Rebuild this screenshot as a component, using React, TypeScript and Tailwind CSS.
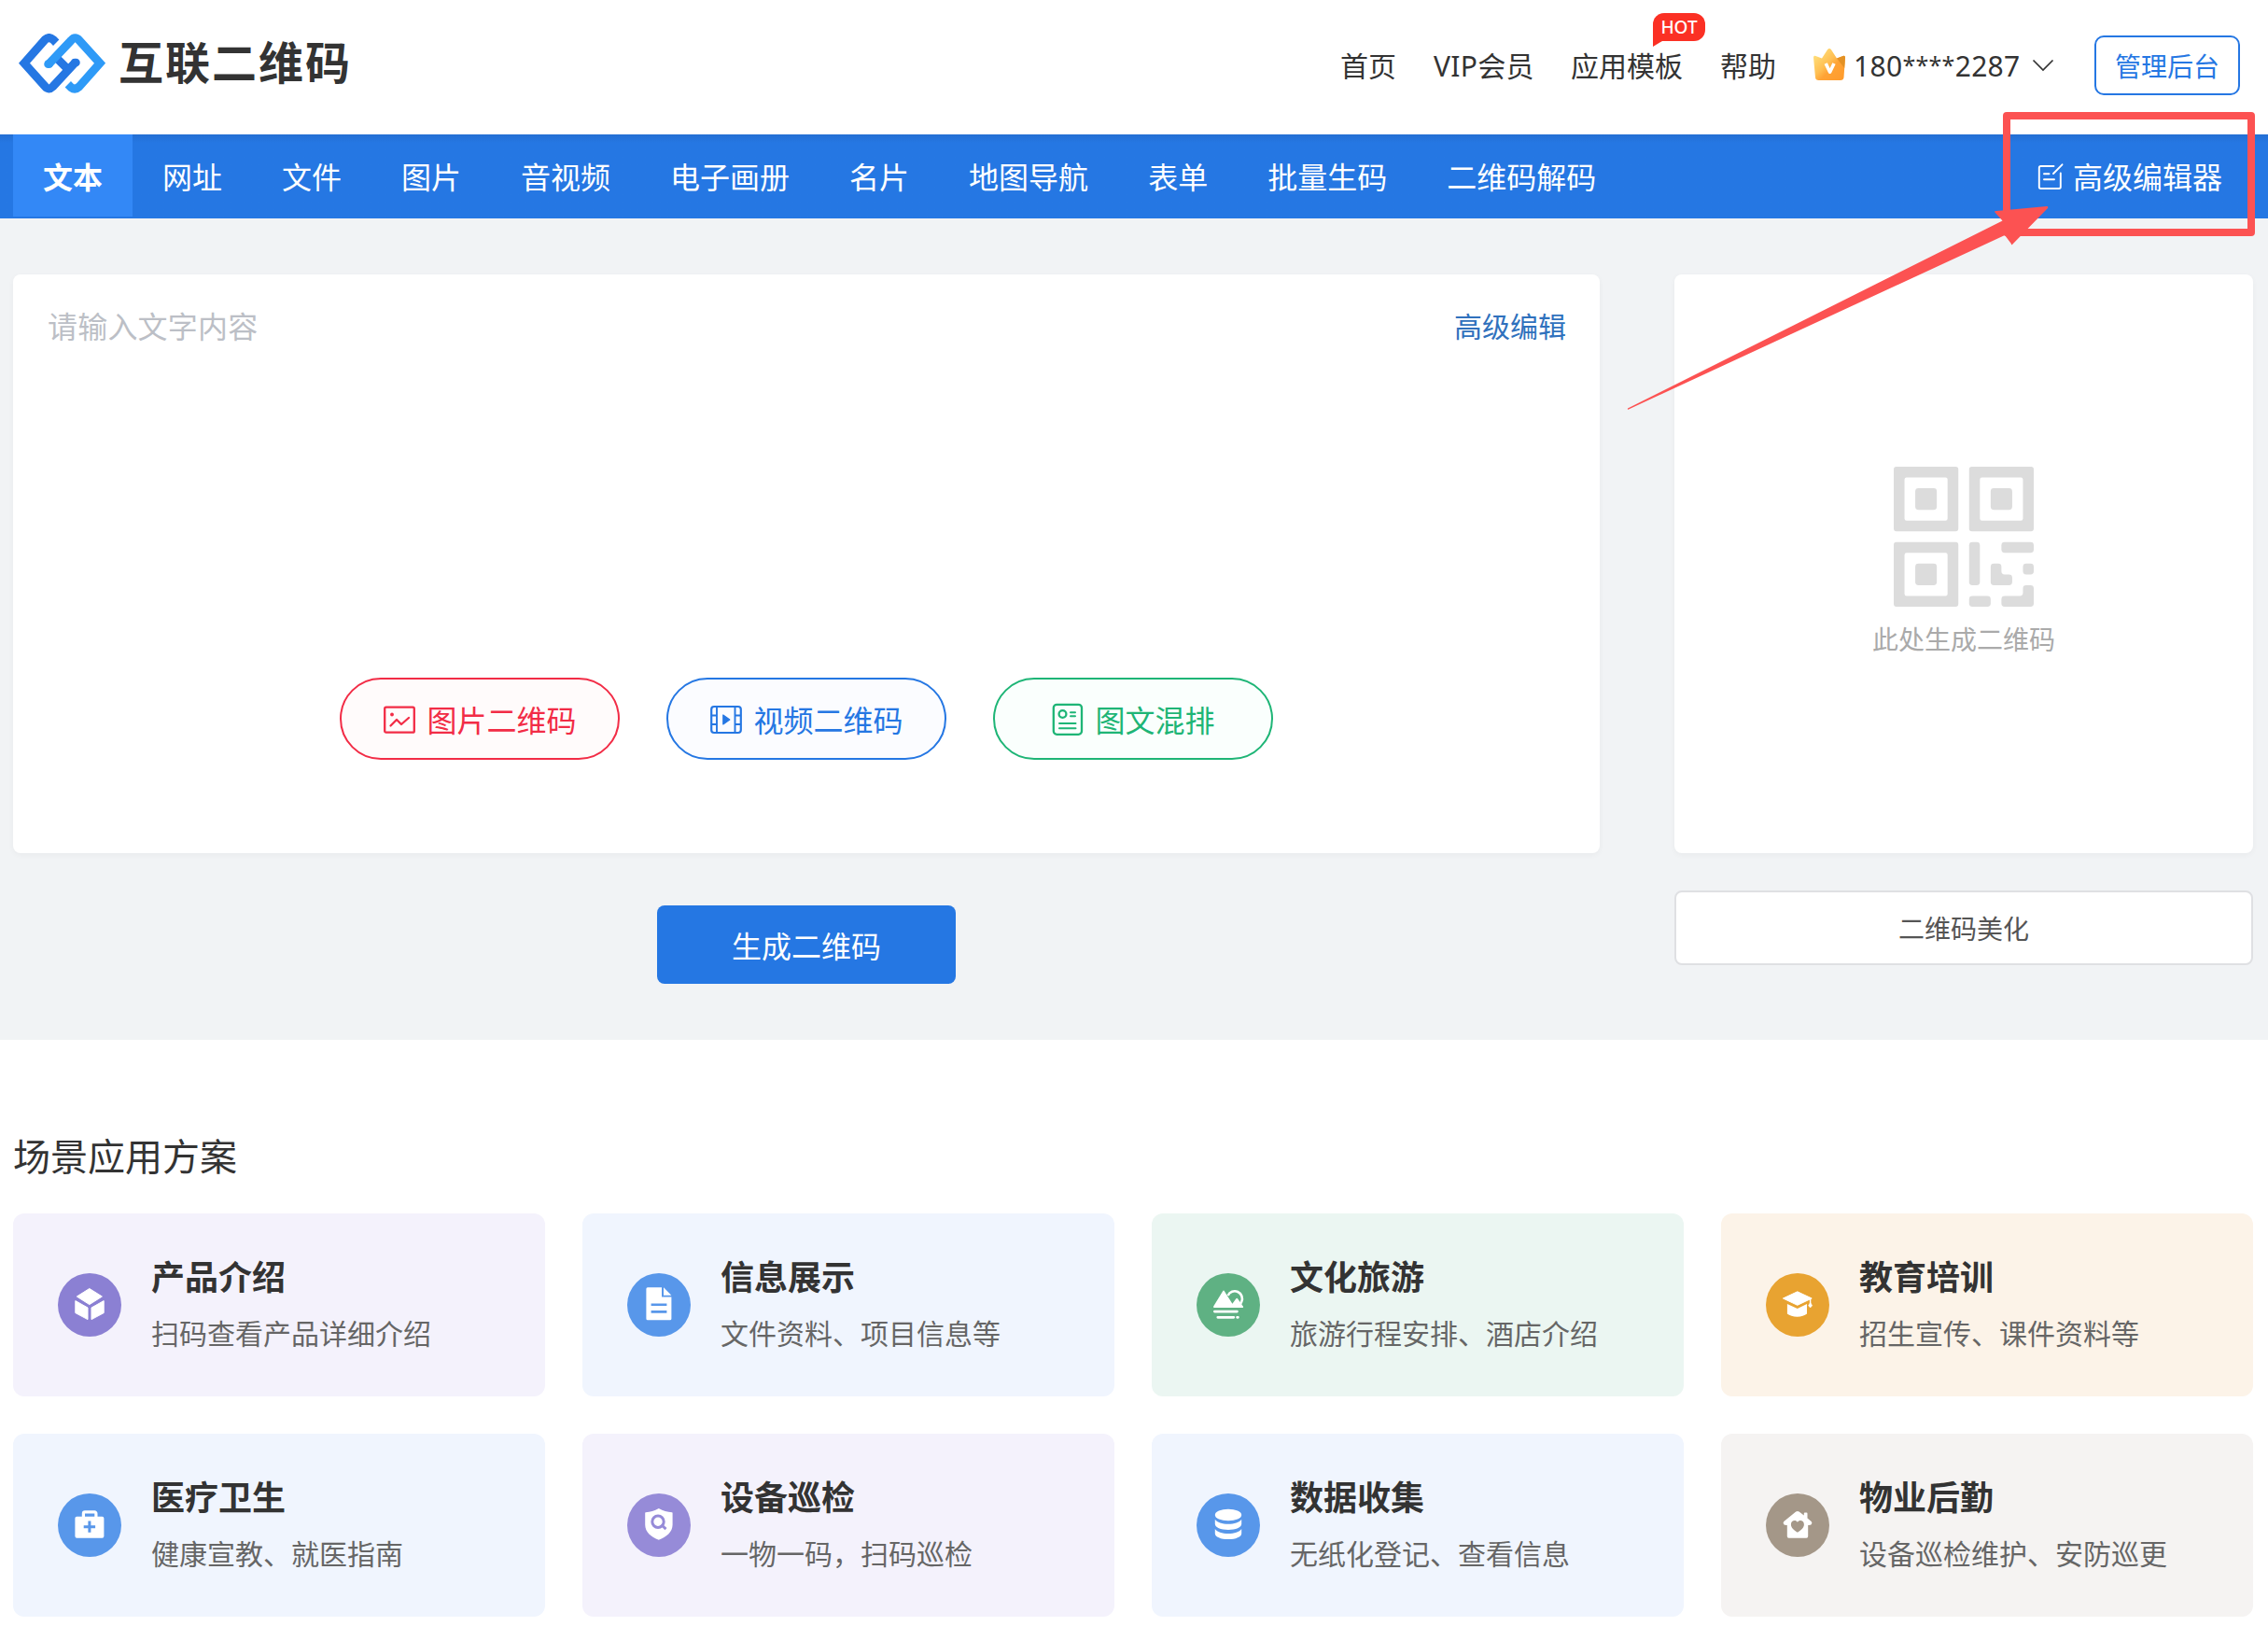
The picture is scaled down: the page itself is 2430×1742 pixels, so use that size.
import React from 'react';

interface Scene {
    title: string;
    desc: string;
    card: string;
    circle: string;
    icon: React.ReactNode;
}

const tabs = ['文本', '网址', '文件', '图片', '音视频', '电子画册', '名片', '地图导航', '表单', '批量生码', '二维码解码'];

const scenes: Scene[] = [
    {
        title: '产品介绍',
        desc: '扫码查看产品详细介绍',
        card: 'bg-[#f4f2fc]',
        circle: 'bg-[#8b80d3]',
        icon: (
            <g fill="#fff" stroke="#fff" strokeWidth="1" strokeLinejoin="round">
                <path d="M33.8 16.5 47.4 25 33.8 33.6 20.3 25Z" />
                <path d="M18.8 29.6 32 37v12.6l-13.2-7Z" />
                <path d="M49.2 29.6 36 37v12.6l13.2-7Z" />
            </g>
        ),
    },
    {
        title: '信息展示',
        desc: '文件资料、项目信息等',
        card: 'bg-[#f0f5fe]',
        circle: 'bg-[#5897ea]',
        icon: (
            <>
                <path d="M21.9 15.3H37v10.2h10.4v23.3a1.5 1.5 0 0 1-1.5 1.5h-24a1.5 1.5 0 0 1-1.5-1.5v-32a1.5 1.5 0 0 1 1.5-1.5Z" fill="#fff" />
                <path d="M39 15.3 47.4 23.7H39Z" fill="#fff" />
                <path d="M25.6 33.8h16.8M25.6 41.4h16.8" stroke="#5897ea" strokeWidth="2.6" />
            </>
        ),
    },
    {
        title: '文化旅游',
        desc: '旅游行程安排、酒店介绍',
        card: 'bg-[#ebf6f2]',
        circle: 'bg-[#5fb183]',
        icon: (
            <>
                <path d="M33.6 24a8 8 0 1 1 14.6 6.6l-1.6 3" fill="none" stroke="#fff" strokeWidth="2.6" />
                <path d="M28 19.4q1-1.6 2 0l8.4 13.4 3.8-5.3q1-1.4 2 0l5.8 8.2q.6 1.4-.8 1.4h-30q-1.8 0-1-1.6Z" fill="#fff" />
                <path d="M19.4 41.1h24M22.8 47.3h17M43.6 47.3h.8" stroke="#fff" strokeWidth="2.8" strokeLinecap="round" />
            </>
        ),
    },
    {
        title: '教育培训',
        desc: '招生宣传、课件资料等',
        card: 'bg-[#fcf3e8]',
        circle: 'bg-[#e8a331]',
        icon: (
            <>
                <path d="M33.8 19.8 49.2 27 33.8 34.3 18.4 27Z" fill="#fff" stroke="#fff" strokeWidth="1" strokeLinejoin="round" />
                <path d="M22.9 33 33.8 38 44 33v10.6c-2.4 2-6 3.1-10.4 3.1s-8.4-1.1-10.7-3.1Z" fill="#fff" />
                <path d="M47.6 27v7" stroke="#fff" strokeWidth="1.4" />
                <path d="m47.6 31.5 2 3.2-2 2.2-2-2.2Z" fill="#fff" stroke="#fff" strokeWidth=".6" strokeLinejoin="round" />
            </>
        ),
    },
    {
        title: '医疗卫生',
        desc: '健康宣教、就医指南',
        card: 'bg-[#f0f5fe]',
        circle: 'bg-[#5897ea]',
        icon: (
            <>
                <path d="M27.4 25.5v-4a1.6 1.6 0 0 1 1.6-1.6h10.3a1.6 1.6 0 0 1 1.6 1.6v4" fill="none" stroke="#fff" strokeWidth="3.2" />
                <rect x="18.4" y="24.7" width="31" height="23" rx="2" fill="#fff" />
                <path d="M33.9 29.6v12.2M27.7 35.7h12.4" stroke="#5897ea" strokeWidth="3" />
            </>
        ),
    },
    {
        title: '设备巡检',
        desc: '一物一码，扫码巡检',
        card: 'bg-[#f4f2fc]',
        circle: 'bg-[#968bd8]',
        icon: (
            <>
                <path d="M33.8 16c4.6 2.8 9.2 3.9 14.2 4.2.4 0 .6.3.6.7v12.6c0 8-6.6 13-14.8 16.3-8.2-3.3-14.6-8.3-14.6-16.3V20.9c0-.4.2-.7.6-.7 5-.3 9.4-1.4 14-4.2Z" fill="#fff" />
                <circle cx="33" cy="30.3" r="6.2" fill="none" stroke="#968bd8" strokeWidth="3" />
                <path d="m36.5 33.5 5 4.6" stroke="#968bd8" strokeWidth="3" />
            </>
        ),
    },
    {
        title: '数据收集',
        desc: '无纸化登记、查看信息',
        card: 'bg-[#f0f5fe]',
        circle: 'bg-[#5897ea]',
        icon: (
            <g fill="#fff">
                <ellipse cx="34" cy="23" rx="14.2" ry="6.2" />
                <path d="M19.8 27.8c2.4 3.2 7.6 5 14.2 5s11.8-1.8 14.2-5v5c0 3.4-6.2 6.2-14.2 6.2s-14.2-2.8-14.2-6.2Z" />
                <path d="M19.8 37.9c2.4 3.2 7.6 5 14.2 5s11.8-1.8 14.2-5v5c0 3.4-6.2 6.2-14.2 6.2s-14.2-2.8-14.2-6.2Z" />
            </g>
        ),
    },
    {
        title: '物业后勤',
        desc: '设备巡检维护、安防巡更',
        card: 'bg-[#f5f3f2]',
        circle: 'bg-[#a49788]',
        icon: (
            <>
                <path d="M32.2 19.6q1.7-1.3 3.4 0l5.2 4V21.4q0-.9.9-.9h1.9q.9 0 .9.9v5.2l4.2 3.4q1.4 1.6 0 3.2-.8.9-3.5.8V46q0 1.7-1.7 1.7h-19q-1.7 0-1.7-1.7V34q-2.7.1-3.5-.8-1.4-1.6 0-3.2Z" fill="#fff" />
                <path d="M33.9 41.7c-4.2-2.6-7-5.2-7-8.5 0-4.4 5-5.4 7-2.5 2-2.9 7-1.9 7 2.5 0 3.3-2.8 5.9-7 8.5Z" fill="#a49788" />
            </>
        ),
    },
];

const Logo = () => (
    <svg viewBox="60 108 280 192" className="w-[93px] h-16" fill="none" strokeWidth="27">
        <g stroke="#2577e3">
            <path d="M181 137 171 127Q158 116 145 127L78 203 145 278Q157 292 170 279L245 198" />
            <path d="M186 190 214 218" />
            <path d="M241 201h4" strokeLinecap="round" strokeWidth="26" />
        </g>
        <path d="M155 208 229 130Q242 115 255 129L322 203 255 279Q242 291 229 281L219 271" stroke="#2e9af7" />
        <path d="M155 206h3" stroke="#2e9af7" strokeLinecap="round" strokeWidth="26" />
    </svg>
);

const CrownIcon = () => (
    <svg viewBox="0 0 34 34" className="w-[34px] h-[34px] mb-[3px]">
        <defs>
            <linearGradient id="crown" x1="0" y1="0" x2="1" y2="1">
                <stop offset="0.1" stopColor="#ffe07c" />
                <stop offset="0.45" stopColor="#ffbf52" />
                <stop offset="0.6" stopColor="#ffa335" />
                <stop offset="1" stopColor="#ff9a2b" />
            </linearGradient>
        </defs>
        <path d="M1.7 7.8 9 10.4 15 1.3q2-2.4 4 0l6 9.1 7.3-2.6q1.7-.2 1.7 1.7L32.5 31q-.3 3-3.5 3H5.500Q2.300 34 2 31L0 9.500q0-1.900 1.700-1.700Z" fill="url(#crown)" />
        <path d="m25 10.400 7.300-2.600q1.700-.2 1.700 1.700l-.8 11.500Z" fill="#e39124" />
        <path d="m12.900 15.500v1.700l4.700 8.600 4.700-8.600v-1.700" fill="none" stroke="none" />
        <path d="m13.200 16 4.400 9.200L22 16" fill="none" stroke="#fff" strokeWidth="3.6" strokeLinejoin="round" />
    </svg>
);

const QrIcon = () => (
    <svg viewBox="0 0 130 130" className="w-[150px] h-[150px]" fill="#dcdcdc">
        {[[0, 0], [70, 0], [0, 70]].map(([x, y]) => (
            <g key={`${x}-${y}`}>
                <path d={`M${x} ${y + 5}v-2.5q0-2.5 2.5-2.5h55q2.5 0 2.5 2.5v55q0 2.5-2.5 2.5h-55q-2.5 0-2.5-2.5ZM${x + 10} ${y + 12}v36q0 2 2 2h36q2 0 2-2v-36q0-2-2-2h-36q-2 0-2 2Z`} fillRule="evenodd" />
                <rect x={x + 20} y={y + 20} width="20" height="20" rx="3" />
            </g>
        ))}
        <rect x="70" y="70" width="10" height="40" rx="3" />
        <rect x="100" y="70" width="30" height="10" rx="3" />
        <rect x="120" y="90" width="10" height="10" rx="3" />
        <rect x="70" y="120" width="20" height="10" rx="3" />
        <path d="M93 90h4q3 0 3 3v4q0 3 3 3h4q3 0 3 3v4q0 3-3 3H93q-3 0-3-3V93q0-3 3-3Z" />
        <path d="M123 110h4q3 0 3 3v14q0 3-3 3h-24q-3 0-3-3v-4q0-3 3-3h14q3 0 3-3v-4q0-3 3-3Z" />
    </svg>
);

const PictureIcon = () => (
    <svg viewBox="0 0 36 36" className="w-9 h-9" fill="none" stroke="currentColor" strokeWidth="2.3" strokeLinecap="round" strokeLinejoin="round">
        <rect x="2.2" y="5.7" width="31.6" height="27" rx="1.5" />
        <circle cx="10" cy="13.500" r="1.9" fill="currentColor" stroke="none" />
        <path d="m8.500 25.500 6.500-6.500 5 5L28 17" />
    </svg>
);

const VideoIcon = () => (
    <svg viewBox="0 0 36 36" className="w-9 h-9" fill="none" stroke="currentColor" strokeWidth="2.2">
        <rect x="2.2" y="5" width="31.6" height="28" rx="3" />
        <path d="M8 5v28M27.5 5v28M2 14.5h6M2 24h6M27.5 14.5H34M27.5 24H34" strokeWidth="1.9" />
        <path d="M14.8 14v10l7-5Z" fill="currentColor" strokeWidth="1.2" strokeLinejoin="round" />
    </svg>
);

const ArticleIcon = () => (
    <svg viewBox="0 0 36 36" className="w-9 h-9" fill="none" stroke="currentColor" strokeWidth="2.3" strokeLinecap="round">
        <rect x="2.8" y="2.8" width="30.2" height="32" rx="3.5" />
        <circle cx="12.5" cy="13" r="3.9" />
        <path d="M21 11.300h5M21 15.300h5M9 23h17.500M9 28.300h17.500" strokeWidth="2" />
    </svg>
);

const EditIcon = () => (
    <svg viewBox="0 0 28 30" className="w-7 h-[30px]" fill="none" stroke="#fff" strokeWidth="1.9" strokeLinecap="round" strokeLinejoin="round">
        <path d="M17.5 4H3.5q-1.7 0-1.7 1.7v20.6q0 1.7 1.7 1.7h19.6q1.7 0 1.7-1.7V11.500" />
        <path d="M26.500 2.300 17 12M7 12.200h5.500M7 18.200h11" />
    </svg>
);

const actions = [
    { label: '图片二维码', icon: <PictureIcon />, color: 'text-[#f22c46] bg-[#fffbfb]' },
    { label: '视频二维码', icon: <VideoIcon />, color: 'text-[#2577e3] bg-[#fbfcff]' },
    { label: '图文混排', icon: <ArticleIcon />, color: 'text-[#1eb576] bg-[#fafffd]' },
];

const Header = () => (
    <header className="h-36 pl-5 pr-[30px] flex items-center justify-between">
        <div className="flex items-center -mt-2">
            <Logo />
            <span className="ml-[14px] text-[48px] leading-[62px] -mt-0.5 font-bold tracking-[2px]">互联二维码</span>
        </div>
        <nav className="flex items-center text-[30px] leading-[64px] -mt-1">
            <a className="w-15 mr-10 pt-px">首页</a>
            <a className="w-[107px] mr-10 pt-px whitespace-nowrap tracking-[0.3px]">VIP会员</a>
            <a className="w-30 mr-10 pt-px relative">
                应用模板
                <span className="absolute left-[88px] -top-6 w-14 h-[30px] rounded-[12px] rounded-bl-none bg-[#fb3024] text-white text-[19px] leading-[30px] font-medium text-center">
                    HOT
                    <svg viewBox="0 0 10 7" className="absolute left-0 top-[29px] w-[10px] h-[7px]">
                        <path d="M0 0h10v1L0 7Z" fill="#fb3024" />
                    </svg>
                </span>
            </a>
            <a className="w-15 mr-10 pt-px">帮助</a>
            <div className="flex items-center w-[261px]">
                <CrownIcon />
                <span className="ml-[9px] w-[178px] pt-px whitespace-nowrap tracking-[0.3px]">
                    180<span className="text-[25px] leading-none align-[3px]">****</span>2287
                </span>
                <svg viewBox="0 0 24 14" className="ml-[13px] w-6 h-[14px]" fill="none" stroke="#333" strokeWidth="1.7">
                    <path d="m1.5 1.5 10.5 10.5L22.5 1.5" />
                </svg>
            </div>
            <button className="ml-10 w-[156px] h-16 pt-px border-2 border-[#2577e3] rounded-[10px] text-[#2577e3] text-[28px] leading-[60px]">管理后台</button>
        </nav>
    </header>
);

const App: React.FC = () => {
    return (
        <div className="relative w-[2430px] h-[1742px] overflow-hidden bg-white text-[#333] font-['Noto_Sans','Noto_Sans_CJK_SC',sans-serif]">
            <Header />

            <div className="h-[90px] pl-[14px] pr-4 flex items-start justify-between bg-[#2577e3] bg-linear-to-b from-[#246fd3] to-[#2577e3] to-10% text-white text-[32px] leading-[92px]">
                <div className="flex">
                    {tabs.map((tab, i) => (
                        <a key={tab} className={i === 0 ? 'h-[88px] px-8 bg-[#3388f6] font-bold' : 'h-[88px] px-8'}>{tab}</a>
                    ))}
                </div>
                <a className="h-[90px] flex items-center pr-[33px]">
                    <EditIcon />
                    <span className="ml-[10px] pt-px">高级编辑器</span>
                </a>
            </div>

            <div className="h-[880px] pl-[14px] pr-4 pt-15 flex justify-between bg-[#f1f3f5]">
                <div className="w-[1700px] flex flex-col items-center">
                    <div className="w-full h-[620px] px-9 pt-8 pb-[100px] flex flex-col justify-between bg-white rounded-lg shadow-[0_2px_6px_rgba(0,0,0,0.04)]">
                        <div className="flex justify-between leading-[48px]">
                            <span className="pl-px text-[32px] text-[#bcbfc6] tracking-[0.2px]">请输入文字内容</span>
                            <a className="text-[30px] text-[#3071bd]">高级编辑</a>
                        </div>
                        <div className="flex justify-center gap-[50px]">
                            {actions.map((action) => (
                                <button key={action.label} className={`w-[300px] h-[88px] flex items-center justify-center gap-[11px] border-2 border-current rounded-full text-[32px] ${action.color}`}>
                                    {action.icon}
                                    <span className="pt-[3px]">{action.label}</span>
                                </button>
                            ))}
                        </div>
                    </div>
                    <button className="mt-14 w-80 h-[84px] pt-[3px] bg-[#2577e3] rounded-lg text-white text-[32px]">生成二维码</button>
                </div>

                <div className="w-[620px]">
                    <div className="h-[620px] pt-[206px] flex flex-col items-center bg-white rounded-lg shadow-[0_2px_6px_rgba(0,0,0,0.04)]">
                        <QrIcon />
                        <span className="mt-[15px] text-[28px] leading-[40px] text-[#aaa]">此处生成二维码</span>
                    </div>
                    <button className="mt-10 w-full h-20 pt-0.5 bg-white border-2 border-[#dfe0e3] rounded-lg text-[28px] text-[#555]">二维码美化</button>
                </div>
            </div>

            <section className="pl-[14px] pr-4 pt-[97px]">
                <h2 className="text-[40px] leading-[56px]">场景应用方案</h2>
                <div className="mt-[33px] grid grid-cols-4 gap-10">
                    {scenes.map((scene) => (
                        <div key={scene.title} className={`h-[196px] pl-12 flex items-center gap-8 rounded-xl ${scene.card}`}>
                            <div className={`w-[68px] h-[68px] rounded-full ${scene.circle}`}>
                                <svg viewBox="0 0 68 68" className="w-full h-full">{scene.icon}</svg>
                            </div>
                            <div className="-mt-px">
                                <h3 className="text-[36px] leading-[56px] font-bold">{scene.title}</h3>
                                <p className="mt-1.5 text-[30px] leading-[52px] text-[#666]">{scene.desc}</p>
                            </div>
                        </div>
                    ))}
                </div>
            </section>

            {/* red marker: frame and arrow on top of the editor entry */}
            <div className="absolute left-[2146px] top-[120px] w-[270px] h-[133px] border-8 border-[#fc5252] rounded-[4px]" />
            <svg viewBox="0 0 460 230" className="absolute left-[1740px] top-[215px] w-[460px] h-[230px]">
                <path d="M4 222.5 405.5 21.5 397 12Q397 11 399 11L453 6Q455 6 454 8L416 47Q415 48 414.8 46L408 37 5 223.5Q3.5 224 4 222.5Z" fill="#fc5252" />
            </svg>
        </div>
    );
};

export default App;
